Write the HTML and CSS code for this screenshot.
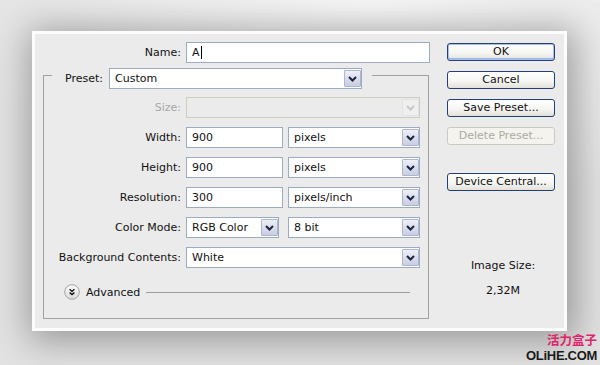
FILE: index.html
```html
<!DOCTYPE html>
<html>
<head>
<meta charset="utf-8">
<link rel="stylesheet" href="styles.css">
</head>
<body>
<div class="stage">
  <div class="dialog">
    <div class="form">
      <div class="name-row">
        <span class="lbl name-lbl">Name:</span>
        <div class="field name-field"><span>A</span><span class="caret"></span></div>
      </div>
      <fieldset class="group">
        <legend class="preset">
          <span class="lbl preset-lbl">Preset:</span>
          <div class="select preset-select"><span class="val">Custom</span><span class="arrow"><svg viewBox="0 0 9 6" width="9" height="6"><path d="M1 1l3.5 3.5L8 1"/></svg></span></div>
        </legend>
        <div class="rows">
          <span class="lbl off">Size:</span>
          <div class="select is-off"><span class="val"></span><span class="arrow"><svg viewBox="0 0 9 6" width="9" height="6"><path d="M1 1l3.5 3.5L8 1"/></svg></span></div>

          <span class="lbl">Width:</span>
          <div class="pair">
            <div class="field num">900</div>
            <div class="select unit"><span class="val">pixels</span><span class="arrow"><svg viewBox="0 0 9 6" width="9" height="6"><path d="M1 1l3.5 3.5L8 1"/></svg></span></div>
          </div>

          <span class="lbl">Height:</span>
          <div class="pair">
            <div class="field num">900</div>
            <div class="select unit"><span class="val">pixels</span><span class="arrow"><svg viewBox="0 0 9 6" width="9" height="6"><path d="M1 1l3.5 3.5L8 1"/></svg></span></div>
          </div>

          <span class="lbl">Resolution:</span>
          <div class="pair">
            <div class="field num">300</div>
            <div class="select unit"><span class="val">pixels/inch</span><span class="arrow"><svg viewBox="0 0 9 6" width="9" height="6"><path d="M1 1l3.5 3.5L8 1"/></svg></span></div>
          </div>

          <span class="lbl">Color Mode:</span>
          <div class="pair">
            <div class="select mode"><span class="val">RGB Color</span><span class="arrow"><svg viewBox="0 0 9 6" width="9" height="6"><path d="M1 1l3.5 3.5L8 1"/></svg></span></div>
            <div class="select unit"><span class="val">8 bit</span><span class="arrow"><svg viewBox="0 0 9 6" width="9" height="6"><path d="M1 1l3.5 3.5L8 1"/></svg></span></div>
          </div>

          <span class="lbl">Background Contents:</span>
          <div class="select"><span class="val">White</span><span class="arrow"><svg viewBox="0 0 9 6" width="9" height="6"><path d="M1 1l3.5 3.5L8 1"/></svg></span></div>
        </div>
        <div class="advanced">
          <svg class="adv-icon" viewBox="0 0 16 16" width="16" height="16">
            <defs>
              <linearGradient id="advg" x1="0" y1="0" x2="0" y2="1">
                <stop offset="0" stop-color="#ffffff"/>
                <stop offset="1" stop-color="#d9d9d9"/>
              </linearGradient>
            </defs>
            <circle cx="8" cy="8" r="7.3" fill="url(#advg)" stroke="#a3a3a3" stroke-width="1"/>
            <path d="M5.6 5.2L8 7.4l2.4-2.2M5.6 8.4L8 10.6l2.4-2.2" fill="none" stroke="#111" stroke-width="1.4"/>
          </svg>
          <span class="adv-text">Advanced</span>
          <span class="rule"></span>
        </div>
      </fieldset>
    </div>
    <div class="buttons">
      <button class="btn default">OK</button>
      <button class="btn">Cancel</button>
      <button class="btn">Save Preset...</button>
      <button class="btn disabled">Delete Preset...</button>
      <button class="btn device">Device Central...</button>
      <div class="info">
        <div>Image Size:</div>
        <div>2,32M</div>
      </div>
    </div>
  </div>
</div>
<div class="watermark">
  <div class="wm-cn">活力盒子</div>
  <div class="wm-en">OLiHE.COM</div>
</div>
</body>
</html>
```

FILE: styles.css
```css
html, body {
  margin: 0;
  height: 365px;
  overflow: hidden;
}
body {
  position: relative;
  font-family: "DejaVu Sans", "Noto Sans", sans-serif;
  font-size: 11px;
  color: #111;
  background: radial-gradient(ellipse 70% 60% at 62% 0%, #f7f7f7 0%, #ececec 55%, #e2e2e2 100%);
}
.stage {
  padding: 31px 0 0 32px;
}
.dialog {
  width: 535px;
  height: 300px;
  box-sizing: border-box;
  border: 3px solid #fcfcfc;
  background: #ebebeb;
  display: flex;
  box-shadow: 3px 4px 34px 6px rgba(0, 0, 0, 0.33);
}
.form {
  padding: 8px 0 0 8px;
  width: 386px;
  flex-shrink: 0;
}
.lbl {
  line-height: 21px;
  white-space: nowrap;
  text-align: right;
}
.lbl.off {
  color: #a8a8a8;
}
.name-row {
  display: flex;
  gap: 5px;
  height: 21px;
}
.name-lbl {
  width: 138px;
  flex-shrink: 0;
}
.field {
  box-sizing: border-box;
  height: 21px;
  border: 1px solid #9aabc2;
  background: #fff;
  padding-left: 5px;
  line-height: 19px;
  display: flex;
  align-items: center;
  flex-shrink: 0;
}
.name-field {
  width: 244px;
}
.caret {
  width: 1px;
  height: 13px;
  background: #000;
  margin-left: 1px;
}
.group {
  margin: 5px 0 0 0;
  padding: 14px 8px 18px 8px;
  border: 1px solid #a0a0a0;
  width: 386px;
  box-sizing: border-box;
  min-width: 0;
}
.preset {
  padding: 0 10px 0 13px;
  margin: 0;
  height: 15px;
  display: flex;
  gap: 4px;
  align-items: flex-start;
}
.preset-lbl {
  width: 40px;
  text-align: left;
  flex-shrink: 0;
}
.preset-select {
  width: 253px;
}
.select {
  display: flex;
  height: 21px;
  box-sizing: border-box;
  border: 1px solid #9aabc2;
  background: #fff;
  flex-shrink: 0;
}
.select .val {
  flex: 1;
  padding-left: 5px;
  line-height: 19px;
  white-space: nowrap;
}
.select .arrow {
  width: 17px;
  margin: 1px 0 1px 1px;
  box-sizing: border-box;
  border: 1px solid #aeb6cf;
  border-radius: 1px;
  background: linear-gradient(#eef0f8, #c8cde0);
  display: flex;
  align-items: center;
  justify-content: center;
}
.select .arrow path {
  fill: none;
  stroke: #1b2440;
  stroke-width: 2;
}
.select.is-off {
  background: #ebebeb;
  border-color: #cfcdc2;
}
.select.is-off .arrow {
  border-color: #e2e2e2;
  background: #efefef;
}
.select.is-off .arrow path {
  stroke: #c8c8c8;
}
.rows {
  display: grid;
  grid-template-columns: 129px 234px;
  column-gap: 5px;
  row-gap: 9px;
  grid-auto-rows: 21px;
}
.pair {
  display: flex;
  justify-content: space-between;
}
.num {
  width: 97px;
}
.unit {
  width: 132px;
}
.mode {
  width: 93px;
}
.advanced {
  display: flex;
  align-items: center;
  height: 16px;
  margin-top: 16px;
  padding-left: 12px;
}
.adv-icon {
  flex-shrink: 0;
}
.adv-text {
  margin-left: 6px;
}
.rule {
  flex: 1;
  height: 1px;
  background: #9c9c9c;
  margin: 0 10px 0 6px;
}
.buttons {
  margin-left: 18px;
  padding-top: 9px;
  width: 108px;
  display: flex;
  flex-direction: column;
  gap: 10px;
}
.btn {
  height: 18px;
  width: 108px;
  box-sizing: border-box;
  padding: 0;
  margin: 0;
  font: inherit;
  color: #111;
  border: 1px solid #24406e;
  border-radius: 3px;
  background: linear-gradient(#ffffff 0%, #f6f6f3 55%, #e3e1da 100%);
  line-height: 16px;
  text-align: center;
  white-space: nowrap;
}
.btn.default {
  box-shadow: inset 0 0 0 1px #a9bff0, inset 0 -1px 0 1px #9db6ea;
}
.btn.disabled {
  border-color: #cbc9bf;
  color: #acaba0;
  background: #f4f3ee;
}
.btn.device {
  margin-top: 18px;
}
.info {
  margin-top: 58px;
  display: flex;
  flex-direction: column;
  align-items: center;
  gap: 11px;
  line-height: 14px;
  padding-left: 4px;
}
.watermark {
  position: absolute;
  right: 3px;
  bottom: 2px;
  text-align: right;
  font-weight: bold;
}
.wm-cn {
  font-family: "Noto Sans CJK SC", sans-serif;
  font-size: 12.5px;
  color: #e0246c;
  line-height: 16px;
}
.wm-en {
  font-family: "Liberation Sans", Arial, sans-serif;
  font-size: 13px;
  color: #1a1a1a;
  letter-spacing: -0.3px;
  line-height: 15px;
}
```
